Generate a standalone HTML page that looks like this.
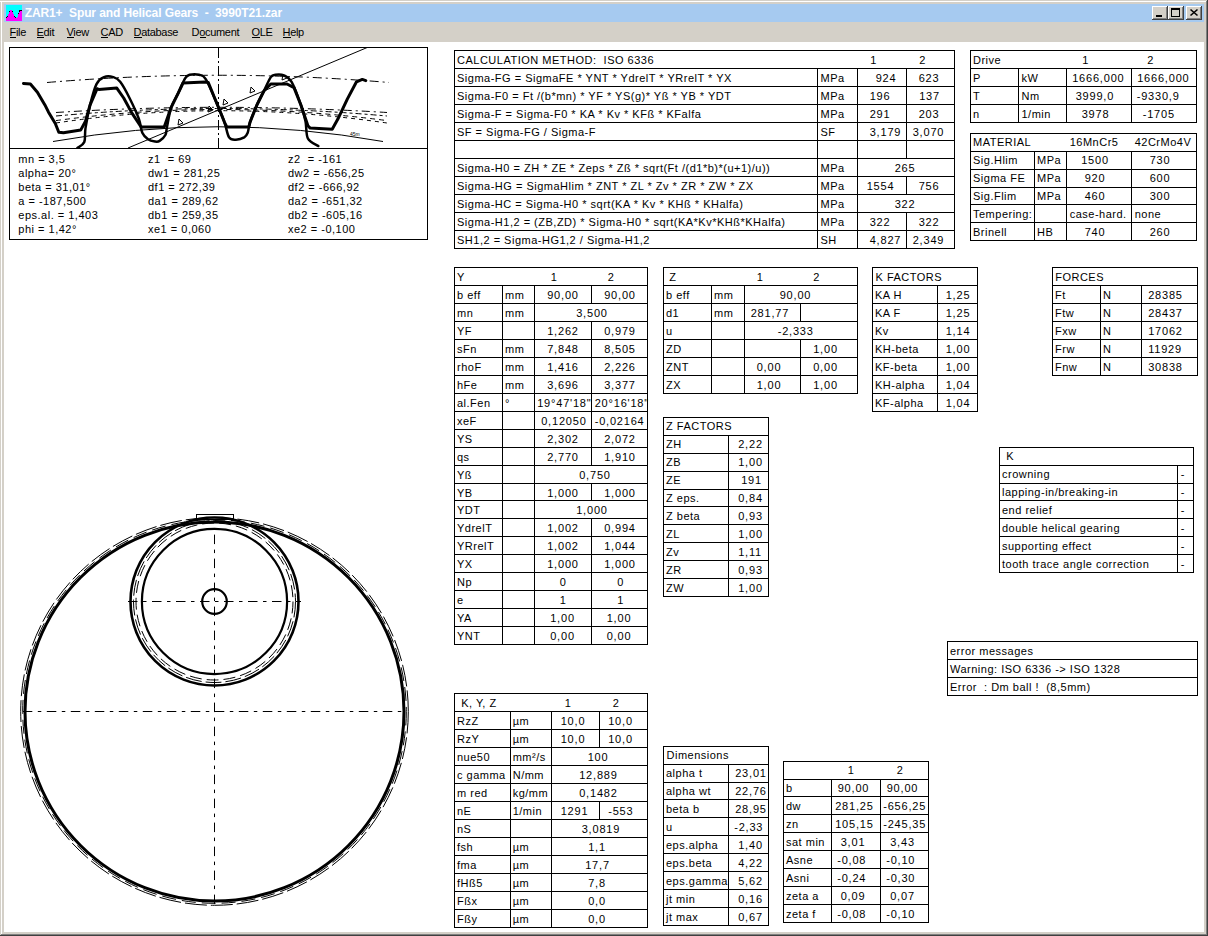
<!DOCTYPE html><html><head><meta charset="utf-8"><style>html,body{margin:0;padding:0;width:1208px;height:936px;overflow:hidden;background:#D4D0C8}text{white-space:pre}</style></head><body><svg width="1208" height="936" viewBox="0 0 1208 936" style="position:absolute;left:0;top:0;font-family:'Liberation Sans',sans-serif">
<rect x="0" y="0" width="1208" height="936" fill="#D4D0C8"/>
<rect x="0" y="1" width="1207" height="1" fill="#FFFFFF"/>
<rect x="1" y="1" width="1" height="934" fill="#FFFFFF"/>
<rect x="1206" y="1" width="1" height="934" fill="#808080"/>
<rect x="1" y="934" width="1206" height="1" fill="#808080"/>
<rect x="1207" y="0" width="1" height="936" fill="#404040"/>
<rect x="0" y="935" width="1208" height="1" fill="#404040"/>
<rect x="4" y="4" width="1200" height="18" fill="#A6CAF0"/>
<g>
<rect x="6" y="5" width="16" height="16" fill="#00FFFF"/>
<rect x="6" y="18" width="1" height="3" fill="#FF00FF"/>
<rect x="7" y="17" width="1" height="4" fill="#FF00FF"/>
<rect x="8" y="14" width="1" height="7" fill="#FF00FF"/>
<rect x="9" y="12" width="1" height="9" fill="#FF00FF"/>
<rect x="10" y="10" width="1" height="11" fill="#FF00FF"/>
<rect x="11" y="10" width="1" height="11" fill="#FF00FF"/>
<rect x="12" y="12" width="1" height="9" fill="#FF00FF"/>
<rect x="13" y="14" width="1" height="7" fill="#FF00FF"/>
<rect x="14" y="17" width="1" height="4" fill="#FF00FF"/>
<rect x="15" y="18" width="1" height="3" fill="#FF00FF"/>
<rect x="16" y="18" width="1" height="3" fill="#FF00FF"/>
<rect x="17" y="17" width="1" height="4" fill="#FF00FF"/>
<rect x="18" y="14" width="1" height="7" fill="#FF00FF"/>
<rect x="19" y="12" width="1" height="9" fill="#FF00FF"/>
<rect x="20" y="11" width="1" height="10" fill="#FF00FF"/>
<rect x="21" y="11" width="1" height="10" fill="#FF00FF"/>
<rect x="6" y="17" width="1" height="1" fill="#000000"/>
<rect x="7" y="16" width="1" height="1" fill="#000000"/>
<rect x="9" y="11" width="1" height="1" fill="#000000"/>
<rect x="12" y="11" width="1" height="1" fill="#000000"/>
<rect x="14" y="16" width="1" height="1" fill="#000000"/>
<rect x="15" y="17" width="1" height="1" fill="#000000"/>
<rect x="18" y="13" width="1" height="1" fill="#000000"/>
<rect x="19" y="10" width="1" height="1" fill="#000000"/>
<rect x="19" y="11" width="1" height="1" fill="#000000"/>
<rect x="20" y="10" width="1" height="1" fill="#000000"/>
<rect x="21" y="10" width="1" height="1" fill="#000000"/>
</g>
<text x="24.7" y="17" font-size="12" font-weight="bold" letter-spacing="-0.1" fill="#FFFFFF" xml:space="preserve">ZAR1+  Spur and Helical Gears  -  3990T21.zar</text>
<rect x="1152" y="6" width="16" height="14" fill="#404040"/>
<rect x="1152" y="6" width="15" height="13" fill="#FFFFFF"/>
<rect x="1153" y="7" width="14" height="12" fill="#808080"/>
<rect x="1153" y="7" width="13" height="11" fill="#D4D0C8"/>
<rect x="1156" y="15" width="6" height="2" fill="#000"/>
<rect x="1168" y="6" width="16" height="14" fill="#404040"/>
<rect x="1168" y="6" width="15" height="13" fill="#FFFFFF"/>
<rect x="1169" y="7" width="14" height="12" fill="#808080"/>
<rect x="1169" y="7" width="13" height="11" fill="#D4D0C8"/>
<rect x="1171" y="8" width="9" height="9" fill="#000"/><rect x="1172" y="10" width="7" height="6" fill="#D4D0C8"/>
<rect x="1186" y="6" width="16" height="14" fill="#404040"/>
<rect x="1186" y="6" width="15" height="13" fill="#FFFFFF"/>
<rect x="1187" y="7" width="14" height="12" fill="#808080"/>
<rect x="1187" y="7" width="13" height="11" fill="#D4D0C8"/>
<path d="M1190.5,9.5 L1197.5,15.5 M1197.5,9.5 L1190.5,15.5" stroke="#000" stroke-width="1.6" fill="none"/>
<text x="9.5" y="36" font-size="11" letter-spacing="-0.3" fill="#000">File</text>
<text x="36.5" y="36" font-size="11" letter-spacing="-0.3" fill="#000">Edit</text>
<text x="66.5" y="36" font-size="11" letter-spacing="-0.3" fill="#000">View</text>
<text x="100.5" y="36" font-size="11" letter-spacing="-0.3" fill="#000">CAD</text>
<text x="133.5" y="36" font-size="11" letter-spacing="-0.3" fill="#000">Database</text>
<text x="191.5" y="36" font-size="11" letter-spacing="-0.3" fill="#000">Document</text>
<text x="251.5" y="36" font-size="11" letter-spacing="-0.3" fill="#000">OLE</text>
<text x="282.5" y="36" font-size="11" letter-spacing="-0.3" fill="#000">Help</text>
<rect x="4" y="42" width="1200" height="890" fill="#FFFFFF"/>
<rect x="10" y="37" width="6" height="1" fill="#000"/>
<rect x="37" y="37" width="7" height="1" fill="#000"/>
<rect x="67" y="37" width="7" height="1" fill="#000"/>
<rect x="101" y="37" width="7" height="1" fill="#000"/>
<rect x="134" y="37" width="8" height="1" fill="#000"/>
<rect x="200" y="37" width="6" height="1" fill="#000"/>
<rect x="252" y="37" width="8" height="1" fill="#000"/>
<rect x="283" y="37" width="8" height="1" fill="#000"/>
<rect x="9" y="47" width="419" height="1" fill="#000"/>
<rect x="9" y="239" width="419" height="1" fill="#000"/>
<rect x="9" y="47" width="1" height="193" fill="#000"/>
<rect x="427" y="47" width="1" height="193" fill="#000"/>
<rect x="9" y="148" width="419" height="1" fill="#000"/>
<svg x="10" y="48" width="417" height="100" viewBox="10 48 417 100" overflow="hidden">
<line x1="218.5" y1="48" x2="218.5" y2="148" stroke="#000" stroke-width="1" stroke-dasharray="10 3 2 3"/>
<path d="M47,82.5 Q218,68 389,82.5" fill="none" stroke="#000" stroke-width="1" stroke-dasharray="9 4 2 4"/>
<path d="M53,141.5 Q218,112 383,141.5" fill="none" stroke="#000" stroke-width="1"/>
<path d="M56,112.5 Q218,102.1 387,112.5" fill="none" stroke="#000" stroke-width="1" stroke-dasharray="8 4 2 4"/>
<path d="M56,116 Q218,101 387,116" fill="none" stroke="#000" stroke-width="1" stroke-dasharray="6 3 3 3"/>
<path d="M56,120.6 Q218,98.4 387,120.6" fill="none" stroke="#000" stroke-width="1" stroke-dasharray="5 4"/>
<path d="M56,123 Q218,98.4 387,123" fill="none" stroke="#000" stroke-width="1" stroke-dasharray="4 4"/>
<line x1="128" y1="148" x2="367" y2="47.6" stroke="#000" stroke-width="1"/>
<polyline points="23.5,83.5 30.4,84.1 37.4,92.2 44.9,104.9 48.4,111.9 55.3,123.5 58.8,132.2 63.5,132.7 80.8,129.9 85.5,121.2 90.1,104.9 97.1,88.7 98.8,89.5 116.8,88.1 123.7,98 131.8,112.9 141.1,127 164.2,127 171.2,107.3 178.1,93.4 183,83 204.8,82 208.3,82.5 217.5,105 224.5,122.3 226.8,127 248.8,127 250,122.3 256.9,105 263.9,91 270.8,84 287,84 294,87.6 300.9,105 307.9,125.8 310.2,128.1 332.2,129.3 338,118.8 347.3,99.1 356.5,81.8 362.3,79.4 365.8,80.6" fill="none" stroke="#000" stroke-width="3" stroke-linejoin="round" stroke-linecap="round"/>
<path d="M77.4,148 C78.6,147.0 83.0,145.3 84.3,142 C85.6,138.7 84.5,134.3 85.5,128.1 C86.5,121.9 88.3,112.2 90.1,104.9 C91.9,97.6 94.2,88.7 96.5,84.1 C98.8,79.5 101.2,78.3 104,77.1 C106.8,75.9 110.6,76.3 113.3,77.1 C116.0,77.9 117.5,78.3 120.2,81.8 C122.9,85.3 126.4,91.8 129.5,98 C132.6,104.2 136.7,113.0 138.8,118.8 C140.9,124.6 140.8,129.3 142.3,132.7 C143.8,136.1 145.9,137.7 148,139.2 C150.1,140.7 153.1,141.2 155,141.5 C156.9,141.8 157.9,142.0 159.6,140.9 C161.3,139.8 164.2,137.3 165.4,135 C166.6,132.7 166.0,131.6 167,127 C168.0,122.4 169.3,112.9 171.2,107.3 C173.0,101.7 175.8,98.2 178.1,93.4 C180.4,88.6 183.2,81.4 185.1,78.3 C187.0,75.2 187.4,75.4 189.7,74.8 C192.0,74.2 196.3,74.0 199,74.8 C201.7,75.6 202.8,74.4 205.9,79.4 C209.0,84.4 214.4,97.8 217.5,105 C220.6,112.2 222.6,116.9 224.5,122.3 C226.4,127.7 227.2,134.5 229.1,137.4 C231.0,140.3 233.5,139.7 236,139.7 C238.5,139.7 242.2,138.6 244.2,137.4 C246.1,136.2 246.7,135.2 247.7,132.7 C248.7,130.2 248.5,126.9 250,122.3 C251.5,117.7 254.6,110.2 256.9,105 C259.2,99.8 261.6,95.7 263.9,91 C266.2,86.3 268.9,79.8 270.8,77.1 C272.7,74.4 273.3,75.1 275.5,74.8 C277.7,74.5 281.3,74.3 284,75.5 C286.7,76.7 288.8,76.9 291.6,81.8 C294.4,86.7 298.6,98.4 300.9,105 C303.2,111.6 304.3,115.6 305.5,121.2 C306.7,126.8 305.8,134.4 307.9,138.5 C310.0,142.6 316.6,144.8 318.3,146" fill="none" stroke="#000" stroke-width="2.5" stroke-linejoin="round" stroke-linecap="round"/>
<path d="M178,125 l1,-6 l4,4 z" fill="none" stroke="#000" stroke-width="1"/>
<path d="M208,112 l1,-6 l4,4 z" fill="none" stroke="#000" stroke-width="1"/>
<path d="M223,105 l1,-6 l4,4 z" fill="none" stroke="#000" stroke-width="1"/>
<path d="M250,93 l1,-6 l4,4 z" fill="none" stroke="#000" stroke-width="1"/>
<path d="M282,80 l1,-6 l4,4 z" fill="none" stroke="#000" stroke-width="1"/>
<text x="350" y="136" font-size="5" fill="#000">45m</text>
</svg>
<text x="18.3" y="163" font-size="11" letter-spacing="0.5" fill="#000" xml:space="preserve">mn = 3,5</text>
<text x="18.3" y="177" font-size="11" letter-spacing="0.5" fill="#000" xml:space="preserve">alpha= 20°</text>
<text x="18.3" y="191" font-size="11" letter-spacing="0.5" fill="#000" xml:space="preserve">beta = 31,01°</text>
<text x="18.3" y="205" font-size="11" letter-spacing="0.5" fill="#000" xml:space="preserve">a = -187,500</text>
<text x="18.3" y="219" font-size="11" letter-spacing="0.5" fill="#000" xml:space="preserve">eps.al. = 1,403</text>
<text x="18.3" y="233" font-size="11" letter-spacing="0.5" fill="#000" xml:space="preserve">phi = 1,42°</text>
<text x="148.0" y="163" font-size="11" letter-spacing="0.5" fill="#000" xml:space="preserve">z1  = 69</text>
<text x="148.0" y="177" font-size="11" letter-spacing="0.5" fill="#000" xml:space="preserve">dw1 = 281,25</text>
<text x="148.0" y="191" font-size="11" letter-spacing="0.5" fill="#000" xml:space="preserve">df1 = 272,39</text>
<text x="148.0" y="205" font-size="11" letter-spacing="0.5" fill="#000" xml:space="preserve">da1 = 289,62</text>
<text x="148.0" y="219" font-size="11" letter-spacing="0.5" fill="#000" xml:space="preserve">db1 = 259,35</text>
<text x="148.0" y="233" font-size="11" letter-spacing="0.5" fill="#000" xml:space="preserve">xe1 = 0,060</text>
<text x="288.0" y="163" font-size="11" letter-spacing="0.5" fill="#000" xml:space="preserve">z2  = -161</text>
<text x="288.0" y="177" font-size="11" letter-spacing="0.5" fill="#000" xml:space="preserve">dw2 = -656,25</text>
<text x="288.0" y="191" font-size="11" letter-spacing="0.5" fill="#000" xml:space="preserve">df2 = -666,92</text>
<text x="288.0" y="205" font-size="11" letter-spacing="0.5" fill="#000" xml:space="preserve">da2 = -651,32</text>
<text x="288.0" y="219" font-size="11" letter-spacing="0.5" fill="#000" xml:space="preserve">db2 = -605,16</text>
<text x="288.0" y="233" font-size="11" letter-spacing="0.5" fill="#000" xml:space="preserve">xe2 = -0,100</text>
<g fill="none" stroke="#000">
<circle cx="214.5" cy="711.5" r="189.5" stroke-width="3"/>
<circle cx="214.5" cy="711.5" r="191.8" stroke-width="1" stroke-dasharray="14 6"/>
<circle cx="214.5" cy="711.5" r="193.8" stroke-width="1" stroke-dasharray="22 4"/>
<circle cx="214.5" cy="601.5" r="72.6" stroke-width="2.2"/>
<circle cx="214.5" cy="601.5" r="84" stroke-width="2.6"/>
<circle cx="214.5" cy="601.5" r="78.5" stroke-width="1" stroke-dasharray="12 5"/>
<circle cx="214.5" cy="601.5" r="81" stroke-width="1" stroke-dasharray="16 4"/>
<circle cx="214.5" cy="601.5" r="12.3" stroke-width="2.2"/>
<rect x="196.5" y="514.5" width="37" height="5" stroke-width="1"/>
</g>
<g stroke="#000" stroke-width="1" fill="none" stroke-dasharray="9.5 5.5 3.5 5.5">
<line x1="22.8" y1="711.5" x2="404" y2="711.5"/>
<line x1="214.5" y1="534.6" x2="214.5" y2="905"/>
<line x1="128" y1="601.5" x2="301" y2="601.5"/>
</g>
<rect x="454" y="50" width="501" height="1" fill="#000"/>
<rect x="454" y="68" width="501" height="1" fill="#000"/>
<rect x="454" y="86" width="501" height="1" fill="#000"/>
<rect x="454" y="104" width="501" height="1" fill="#000"/>
<rect x="454" y="122" width="501" height="1" fill="#000"/>
<rect x="454" y="140" width="501" height="1" fill="#000"/>
<rect x="454" y="158" width="501" height="1" fill="#000"/>
<rect x="454" y="176" width="501" height="1" fill="#000"/>
<rect x="454" y="194" width="501" height="1" fill="#000"/>
<rect x="454" y="212" width="501" height="1" fill="#000"/>
<rect x="454" y="230" width="501" height="1" fill="#000"/>
<rect x="454" y="248" width="501" height="1" fill="#000"/>
<rect x="454" y="50" width="1" height="199" fill="#000"/>
<rect x="954" y="50" width="1" height="199" fill="#000"/>
<text x="457.0" y="64" font-size="11" letter-spacing="0.5" fill="#000">CALCULATION METHOD:  ISO 6336</text>
<text x="870.2" y="64" font-size="11" letter-spacing="0.8" fill="#000">1</text>
<text x="919.2" y="64" font-size="11" letter-spacing="0.8" fill="#000">2</text>
<rect x="817" y="68" width="1" height="19" fill="#000"/>
<rect x="857" y="68" width="1" height="19" fill="#000"/>
<rect x="906" y="68" width="1" height="19" fill="#000"/>
<text x="457.0" y="82" font-size="11" letter-spacing="0.5" fill="#000">Sigma-FG = SigmaFE * YNT * YdrelT * YRrelT * YX</text>
<text x="820.5" y="82" font-size="11" letter-spacing="0.5" fill="#000">MPa</text>
<text x="875.7" y="82" font-size="11" letter-spacing="0.8" fill="#000">924</text>
<text x="918.7" y="82" font-size="11" letter-spacing="0.8" fill="#000">623</text>
<rect x="817" y="86" width="1" height="19" fill="#000"/>
<rect x="857" y="86" width="1" height="19" fill="#000"/>
<rect x="906" y="86" width="1" height="19" fill="#000"/>
<text x="457.0" y="100" font-size="11" letter-spacing="0.5" fill="#000">Sigma-F0 = Ft /(b*mn) * YF * YS(g)* Yß * YB * YDT</text>
<text x="820.5" y="100" font-size="11" letter-spacing="0.5" fill="#000">MPa</text>
<text x="869.7" y="100" font-size="11" letter-spacing="0.8" fill="#000">196</text>
<text x="919.2" y="100" font-size="11" letter-spacing="0.8" fill="#000">137</text>
<rect x="817" y="104" width="1" height="19" fill="#000"/>
<rect x="857" y="104" width="1" height="19" fill="#000"/>
<rect x="906" y="104" width="1" height="19" fill="#000"/>
<text x="457.0" y="118" font-size="11" letter-spacing="0.5" fill="#000">Sigma-F = Sigma-F0 * KA * Kv * KFß * KFalfa</text>
<text x="820.5" y="118" font-size="11" letter-spacing="0.5" fill="#000">MPa</text>
<text x="869.7" y="118" font-size="11" letter-spacing="0.8" fill="#000">291</text>
<text x="918.7" y="118" font-size="11" letter-spacing="0.8" fill="#000">203</text>
<rect x="817" y="122" width="1" height="19" fill="#000"/>
<rect x="857" y="122" width="1" height="19" fill="#000"/>
<rect x="906" y="122" width="1" height="19" fill="#000"/>
<text x="457.0" y="136" font-size="11" letter-spacing="0.5" fill="#000">SF = Sigma-FG / Sigma-F</text>
<text x="820.5" y="136" font-size="11" letter-spacing="0.5" fill="#000">SF</text>
<text x="869.7" y="136" font-size="11" letter-spacing="0.8" fill="#000">3,179</text>
<text x="912.7" y="136" font-size="11" letter-spacing="0.8" fill="#000">3,070</text>
<rect x="817" y="140" width="1" height="19" fill="#000"/>
<rect x="857" y="140" width="1" height="19" fill="#000"/>
<rect x="906" y="140" width="1" height="19" fill="#000"/>
<rect x="817" y="158" width="1" height="19" fill="#000"/>
<rect x="857" y="158" width="1" height="19" fill="#000"/>
<text x="457.0" y="172" font-size="11" letter-spacing="0.5" fill="#000">Sigma-H0 = ZH * ZE * Zeps * Zß * sqrt(Ft /(d1*b)*(u+1)/u))</text>
<text x="820.5" y="172" font-size="11" letter-spacing="0.5" fill="#000">MPa</text>
<text x="894.7" y="172" font-size="11" letter-spacing="0.8" fill="#000">265</text>
<rect x="817" y="176" width="1" height="19" fill="#000"/>
<rect x="857" y="176" width="1" height="19" fill="#000"/>
<rect x="906" y="176" width="1" height="19" fill="#000"/>
<text x="457.0" y="190" font-size="11" letter-spacing="0.5" fill="#000">Sigma-HG = SigmaHlim * ZNT * ZL * Zv * ZR * ZW * ZX</text>
<text x="820.5" y="190" font-size="11" letter-spacing="0.5" fill="#000">MPa</text>
<text x="866.7" y="190" font-size="11" letter-spacing="0.8" fill="#000">1554</text>
<text x="918.7" y="190" font-size="11" letter-spacing="0.8" fill="#000">756</text>
<rect x="817" y="194" width="1" height="19" fill="#000"/>
<rect x="857" y="194" width="1" height="19" fill="#000"/>
<text x="457.0" y="208" font-size="11" letter-spacing="0.5" fill="#000">Sigma-HC = Sigma-H0 * sqrt(KA * Kv * KHß * KHalfa)</text>
<text x="820.5" y="208" font-size="11" letter-spacing="0.5" fill="#000">MPa</text>
<text x="894.7" y="208" font-size="11" letter-spacing="0.8" fill="#000">322</text>
<rect x="817" y="212" width="1" height="19" fill="#000"/>
<rect x="857" y="212" width="1" height="19" fill="#000"/>
<rect x="906" y="212" width="1" height="19" fill="#000"/>
<text x="457.0" y="226" font-size="11" letter-spacing="0.5" fill="#000">Sigma-H1,2 = (ZB,ZD) * Sigma-H0 * sqrt(KA*Kv*KHß*KHalfa)</text>
<text x="820.5" y="226" font-size="11" letter-spacing="0.5" fill="#000">MPa</text>
<text x="869.7" y="226" font-size="11" letter-spacing="0.8" fill="#000">322</text>
<text x="918.7" y="226" font-size="11" letter-spacing="0.8" fill="#000">322</text>
<rect x="817" y="230" width="1" height="19" fill="#000"/>
<rect x="857" y="230" width="1" height="19" fill="#000"/>
<rect x="906" y="230" width="1" height="19" fill="#000"/>
<text x="457.0" y="244" font-size="11" letter-spacing="0.5" fill="#000">SH1,2 = Sigma-HG1,2 / Sigma-H1,2</text>
<text x="820.5" y="244" font-size="11" letter-spacing="0.5" fill="#000">SH</text>
<text x="869.7" y="244" font-size="11" letter-spacing="0.8" fill="#000">4,827</text>
<text x="912.7" y="244" font-size="11" letter-spacing="0.8" fill="#000">2,349</text>
<rect x="970" y="50" width="227" height="1" fill="#000"/>
<rect x="970" y="68" width="227" height="1" fill="#000"/>
<rect x="970" y="86" width="227" height="1" fill="#000"/>
<rect x="970" y="104" width="227" height="1" fill="#000"/>
<rect x="970" y="122" width="227" height="1" fill="#000"/>
<rect x="970" y="50" width="1" height="73" fill="#000"/>
<rect x="1196" y="50" width="1" height="73" fill="#000"/>
<text x="973.0" y="64" font-size="11" letter-spacing="0.5" fill="#000">Drive</text>
<text x="1082.2" y="64" font-size="11" letter-spacing="0.8" fill="#000">1</text>
<text x="1147.2" y="64" font-size="11" letter-spacing="0.8" fill="#000">2</text>
<rect x="1018" y="68" width="1" height="19" fill="#000"/>
<rect x="1066" y="68" width="1" height="19" fill="#000"/>
<rect x="1131" y="68" width="1" height="19" fill="#000"/>
<text x="973.0" y="82" font-size="11" letter-spacing="0.5" fill="#000">P</text>
<text x="1021.5" y="82" font-size="11" letter-spacing="0.5" fill="#000">kW</text>
<text x="1072.2" y="82" font-size="11" letter-spacing="0.8" fill="#000">1666,000</text>
<text x="1137.2" y="82" font-size="11" letter-spacing="0.8" fill="#000">1666,000</text>
<rect x="1018" y="86" width="1" height="19" fill="#000"/>
<rect x="1066" y="86" width="1" height="19" fill="#000"/>
<rect x="1131" y="86" width="1" height="19" fill="#000"/>
<text x="973.0" y="100" font-size="11" letter-spacing="0.5" fill="#000">T</text>
<text x="1021.5" y="100" font-size="11" letter-spacing="0.5" fill="#000">Nm</text>
<text x="1075.7" y="100" font-size="11" letter-spacing="0.8" fill="#000">3999,0</text>
<text x="1136.7" y="100" font-size="11" letter-spacing="0.8" fill="#000">-9330,9</text>
<rect x="1018" y="104" width="1" height="19" fill="#000"/>
<rect x="1066" y="104" width="1" height="19" fill="#000"/>
<rect x="1131" y="104" width="1" height="19" fill="#000"/>
<text x="973.0" y="118" font-size="11" letter-spacing="0.5" fill="#000">n</text>
<text x="1021.5" y="118" font-size="11" letter-spacing="0.5" fill="#000">1/min</text>
<text x="1081.7" y="118" font-size="11" letter-spacing="0.8" fill="#000">3978</text>
<text x="1142.7" y="118" font-size="11" letter-spacing="0.8" fill="#000">-1705</text>
<rect x="970" y="133" width="227" height="1" fill="#000"/>
<rect x="970" y="151" width="227" height="1" fill="#000"/>
<rect x="970" y="169" width="227" height="1" fill="#000"/>
<rect x="970" y="187" width="227" height="1" fill="#000"/>
<rect x="970" y="204" width="227" height="1" fill="#000"/>
<rect x="970" y="222" width="227" height="1" fill="#000"/>
<rect x="970" y="240" width="227" height="1" fill="#000"/>
<rect x="970" y="133" width="1" height="108" fill="#000"/>
<rect x="1196" y="133" width="1" height="108" fill="#000"/>
<text x="973.0" y="146" font-size="11" letter-spacing="0.5" fill="#000">MATERIAL</text>
<text x="1069.7" y="146" font-size="11" letter-spacing="0.5" fill="#000">16MnCr5</text>
<text x="1134.7" y="146" font-size="11" letter-spacing="0.5" fill="#000">42CrMo4V</text>
<rect x="1034" y="151" width="1" height="19" fill="#000"/>
<rect x="1066" y="151" width="1" height="19" fill="#000"/>
<rect x="1131" y="151" width="1" height="19" fill="#000"/>
<text x="973.0" y="164" font-size="11" letter-spacing="0.5" fill="#000">Sig.Hlim</text>
<text x="1037.0" y="164" font-size="11" letter-spacing="0.5" fill="#000">MPa</text>
<text x="1081.2" y="164" font-size="11" letter-spacing="0.8" fill="#000">1500</text>
<text x="1149.7" y="164" font-size="11" letter-spacing="0.8" fill="#000">730</text>
<rect x="1034" y="169" width="1" height="19" fill="#000"/>
<rect x="1066" y="169" width="1" height="19" fill="#000"/>
<rect x="1131" y="169" width="1" height="19" fill="#000"/>
<text x="973.0" y="182" font-size="11" letter-spacing="0.5" fill="#000">Sigma FE</text>
<text x="1037.0" y="182" font-size="11" letter-spacing="0.5" fill="#000">MPa</text>
<text x="1084.7" y="182" font-size="11" letter-spacing="0.8" fill="#000">920</text>
<text x="1149.7" y="182" font-size="11" letter-spacing="0.8" fill="#000">600</text>
<rect x="1034" y="187" width="1" height="18" fill="#000"/>
<rect x="1066" y="187" width="1" height="18" fill="#000"/>
<rect x="1131" y="187" width="1" height="18" fill="#000"/>
<text x="973.0" y="200" font-size="11" letter-spacing="0.5" fill="#000">Sig.Flim</text>
<text x="1037.0" y="200" font-size="11" letter-spacing="0.5" fill="#000">MPa</text>
<text x="1084.7" y="200" font-size="11" letter-spacing="0.8" fill="#000">460</text>
<text x="1149.7" y="200" font-size="11" letter-spacing="0.8" fill="#000">300</text>
<rect x="1034" y="204" width="1" height="19" fill="#000"/>
<rect x="1066" y="204" width="1" height="19" fill="#000"/>
<rect x="1131" y="204" width="1" height="19" fill="#000"/>
<text x="973.0" y="218" font-size="11" letter-spacing="0.5" fill="#000">Tempering:</text>
<text x="1069.7" y="218" font-size="11" letter-spacing="0.5" fill="#000">case-hard.</text>
<text x="1134.7" y="218" font-size="11" letter-spacing="0.5" fill="#000">none</text>
<rect x="1034" y="222" width="1" height="19" fill="#000"/>
<rect x="1066" y="222" width="1" height="19" fill="#000"/>
<rect x="1131" y="222" width="1" height="19" fill="#000"/>
<text x="973.0" y="236" font-size="11" letter-spacing="0.5" fill="#000">Brinell</text>
<text x="1037.0" y="236" font-size="11" letter-spacing="0.5" fill="#000">HB</text>
<text x="1084.7" y="236" font-size="11" letter-spacing="0.8" fill="#000">740</text>
<text x="1149.7" y="236" font-size="11" letter-spacing="0.8" fill="#000">260</text>
<rect x="454" y="267" width="194" height="1" fill="#000"/>
<rect x="454" y="285" width="194" height="1" fill="#000"/>
<rect x="454" y="303" width="194" height="1" fill="#000"/>
<rect x="454" y="321" width="194" height="1" fill="#000"/>
<rect x="454" y="339" width="194" height="1" fill="#000"/>
<rect x="454" y="357" width="194" height="1" fill="#000"/>
<rect x="454" y="375" width="194" height="1" fill="#000"/>
<rect x="454" y="393" width="194" height="1" fill="#000"/>
<rect x="454" y="411" width="194" height="1" fill="#000"/>
<rect x="454" y="429" width="194" height="1" fill="#000"/>
<rect x="454" y="447" width="194" height="1" fill="#000"/>
<rect x="454" y="465" width="194" height="1" fill="#000"/>
<rect x="454" y="483" width="194" height="1" fill="#000"/>
<rect x="454" y="500" width="194" height="1" fill="#000"/>
<rect x="454" y="518" width="194" height="1" fill="#000"/>
<rect x="454" y="536" width="194" height="1" fill="#000"/>
<rect x="454" y="554" width="194" height="1" fill="#000"/>
<rect x="454" y="572" width="194" height="1" fill="#000"/>
<rect x="454" y="590" width="194" height="1" fill="#000"/>
<rect x="454" y="608" width="194" height="1" fill="#000"/>
<rect x="454" y="626" width="194" height="1" fill="#000"/>
<rect x="454" y="644" width="194" height="1" fill="#000"/>
<rect x="454" y="267" width="1" height="378" fill="#000"/>
<rect x="647" y="267" width="1" height="378" fill="#000"/>
<text x="457.0" y="281" font-size="11" letter-spacing="0.5" fill="#000">Y</text>
<text x="550.7" y="281" font-size="11" letter-spacing="0.8" fill="#000">1</text>
<text x="607.7" y="281" font-size="11" letter-spacing="0.8" fill="#000">2</text>
<rect x="502" y="285" width="1" height="19" fill="#000"/>
<rect x="534" y="285" width="1" height="19" fill="#000"/>
<rect x="591" y="285" width="1" height="19" fill="#000"/>
<text x="457.0" y="299" font-size="11" letter-spacing="0.5" fill="#000">b eff</text>
<text x="505.0" y="299" font-size="11" letter-spacing="0.5" fill="#000">mm</text>
<text x="547.2" y="299" font-size="11" letter-spacing="0.8" fill="#000">90,00</text>
<text x="604.2" y="299" font-size="11" letter-spacing="0.8" fill="#000">90,00</text>
<rect x="502" y="303" width="1" height="19" fill="#000"/>
<rect x="534" y="303" width="1" height="19" fill="#000"/>
<text x="457.0" y="317" font-size="11" letter-spacing="0.5" fill="#000">mn</text>
<text x="505.0" y="317" font-size="11" letter-spacing="0.5" fill="#000">mm</text>
<text x="576.2" y="317" font-size="11" letter-spacing="0.8" fill="#000">3,500</text>
<rect x="502" y="321" width="1" height="19" fill="#000"/>
<rect x="534" y="321" width="1" height="19" fill="#000"/>
<rect x="591" y="321" width="1" height="19" fill="#000"/>
<text x="457.0" y="335" font-size="11" letter-spacing="0.5" fill="#000">YF</text>
<text x="547.2" y="335" font-size="11" letter-spacing="0.8" fill="#000">1,262</text>
<text x="604.2" y="335" font-size="11" letter-spacing="0.8" fill="#000">0,979</text>
<rect x="502" y="339" width="1" height="19" fill="#000"/>
<rect x="534" y="339" width="1" height="19" fill="#000"/>
<rect x="591" y="339" width="1" height="19" fill="#000"/>
<text x="457.0" y="353" font-size="11" letter-spacing="0.5" fill="#000">sFn</text>
<text x="505.0" y="353" font-size="11" letter-spacing="0.5" fill="#000">mm</text>
<text x="547.2" y="353" font-size="11" letter-spacing="0.8" fill="#000">7,848</text>
<text x="604.2" y="353" font-size="11" letter-spacing="0.8" fill="#000">8,505</text>
<rect x="502" y="357" width="1" height="19" fill="#000"/>
<rect x="534" y="357" width="1" height="19" fill="#000"/>
<rect x="591" y="357" width="1" height="19" fill="#000"/>
<text x="457.0" y="371" font-size="11" letter-spacing="0.5" fill="#000">rhoF</text>
<text x="505.0" y="371" font-size="11" letter-spacing="0.5" fill="#000">mm</text>
<text x="547.2" y="371" font-size="11" letter-spacing="0.8" fill="#000">1,416</text>
<text x="604.2" y="371" font-size="11" letter-spacing="0.8" fill="#000">2,226</text>
<rect x="502" y="375" width="1" height="19" fill="#000"/>
<rect x="534" y="375" width="1" height="19" fill="#000"/>
<rect x="591" y="375" width="1" height="19" fill="#000"/>
<text x="457.0" y="389" font-size="11" letter-spacing="0.5" fill="#000">hFe</text>
<text x="505.0" y="389" font-size="11" letter-spacing="0.5" fill="#000">mm</text>
<text x="547.2" y="389" font-size="11" letter-spacing="0.8" fill="#000">3,696</text>
<text x="604.2" y="389" font-size="11" letter-spacing="0.8" fill="#000">3,377</text>
<rect x="502" y="393" width="1" height="19" fill="#000"/>
<rect x="534" y="393" width="1" height="19" fill="#000"/>
<rect x="591" y="393" width="1" height="19" fill="#000"/>
<text x="457.0" y="407" font-size="11" letter-spacing="0.5" fill="#000">al.Fen</text>
<text x="505.0" y="407" font-size="11" letter-spacing="0.8" fill="#000">°</text>
<text x="537.2" y="407" font-size="11" letter-spacing="0.8" fill="#000">19°47'18"</text>
<text x="594.7" y="407" font-size="11" letter-spacing="0.8" fill="#000">20°16'18"</text>
<rect x="502" y="411" width="1" height="19" fill="#000"/>
<rect x="534" y="411" width="1" height="19" fill="#000"/>
<rect x="591" y="411" width="1" height="19" fill="#000"/>
<text x="457.0" y="425" font-size="11" letter-spacing="0.5" fill="#000">xeF</text>
<text x="541.2" y="425" font-size="11" letter-spacing="0.8" fill="#000">0,12050</text>
<text x="594.7" y="425" font-size="11" letter-spacing="0.8" fill="#000">-0,02164</text>
<rect x="502" y="429" width="1" height="19" fill="#000"/>
<rect x="534" y="429" width="1" height="19" fill="#000"/>
<rect x="591" y="429" width="1" height="19" fill="#000"/>
<text x="457.0" y="443" font-size="11" letter-spacing="0.5" fill="#000">YS</text>
<text x="547.2" y="443" font-size="11" letter-spacing="0.8" fill="#000">2,302</text>
<text x="604.2" y="443" font-size="11" letter-spacing="0.8" fill="#000">2,072</text>
<rect x="502" y="447" width="1" height="19" fill="#000"/>
<rect x="534" y="447" width="1" height="19" fill="#000"/>
<rect x="591" y="447" width="1" height="19" fill="#000"/>
<text x="457.0" y="461" font-size="11" letter-spacing="0.5" fill="#000">qs</text>
<text x="547.2" y="461" font-size="11" letter-spacing="0.8" fill="#000">2,770</text>
<text x="604.2" y="461" font-size="11" letter-spacing="0.8" fill="#000">1,910</text>
<rect x="502" y="465" width="1" height="19" fill="#000"/>
<rect x="534" y="465" width="1" height="19" fill="#000"/>
<text x="457.0" y="479" font-size="11" letter-spacing="0.5" fill="#000">Yß</text>
<text x="579.2" y="479" font-size="11" letter-spacing="0.8" fill="#000">0,750</text>
<rect x="502" y="483" width="1" height="18" fill="#000"/>
<rect x="534" y="483" width="1" height="18" fill="#000"/>
<rect x="591" y="483" width="1" height="18" fill="#000"/>
<text x="457.0" y="497" font-size="11" letter-spacing="0.5" fill="#000">YB</text>
<text x="547.2" y="497" font-size="11" letter-spacing="0.8" fill="#000">1,000</text>
<text x="604.2" y="497" font-size="11" letter-spacing="0.8" fill="#000">1,000</text>
<rect x="502" y="500" width="1" height="19" fill="#000"/>
<rect x="534" y="500" width="1" height="19" fill="#000"/>
<text x="457.0" y="514" font-size="11" letter-spacing="0.5" fill="#000">YDT</text>
<text x="576.2" y="514" font-size="11" letter-spacing="0.8" fill="#000">1,000</text>
<rect x="502" y="518" width="1" height="19" fill="#000"/>
<rect x="534" y="518" width="1" height="19" fill="#000"/>
<rect x="591" y="518" width="1" height="19" fill="#000"/>
<text x="457.0" y="532" font-size="11" letter-spacing="0.5" fill="#000">YdrelT</text>
<text x="547.2" y="532" font-size="11" letter-spacing="0.8" fill="#000">1,002</text>
<text x="604.2" y="532" font-size="11" letter-spacing="0.8" fill="#000">0,994</text>
<rect x="502" y="536" width="1" height="19" fill="#000"/>
<rect x="534" y="536" width="1" height="19" fill="#000"/>
<rect x="591" y="536" width="1" height="19" fill="#000"/>
<text x="457.0" y="550" font-size="11" letter-spacing="0.5" fill="#000">YRrelT</text>
<text x="547.2" y="550" font-size="11" letter-spacing="0.8" fill="#000">1,002</text>
<text x="604.2" y="550" font-size="11" letter-spacing="0.8" fill="#000">1,044</text>
<rect x="502" y="554" width="1" height="19" fill="#000"/>
<rect x="534" y="554" width="1" height="19" fill="#000"/>
<rect x="591" y="554" width="1" height="19" fill="#000"/>
<text x="457.0" y="568" font-size="11" letter-spacing="0.5" fill="#000">YX</text>
<text x="547.2" y="568" font-size="11" letter-spacing="0.8" fill="#000">1,000</text>
<text x="604.2" y="568" font-size="11" letter-spacing="0.8" fill="#000">1,000</text>
<rect x="502" y="572" width="1" height="19" fill="#000"/>
<rect x="534" y="572" width="1" height="19" fill="#000"/>
<rect x="591" y="572" width="1" height="19" fill="#000"/>
<text x="457.0" y="586" font-size="11" letter-spacing="0.5" fill="#000">Np</text>
<text x="559.7" y="586" font-size="11" letter-spacing="0.8" fill="#000">0</text>
<text x="617.2" y="586" font-size="11" letter-spacing="0.8" fill="#000">0</text>
<rect x="502" y="590" width="1" height="19" fill="#000"/>
<rect x="534" y="590" width="1" height="19" fill="#000"/>
<rect x="591" y="590" width="1" height="19" fill="#000"/>
<text x="457.0" y="604" font-size="11" letter-spacing="0.5" fill="#000">e</text>
<text x="559.7" y="604" font-size="11" letter-spacing="0.8" fill="#000">1</text>
<text x="617.2" y="604" font-size="11" letter-spacing="0.8" fill="#000">1</text>
<rect x="502" y="608" width="1" height="19" fill="#000"/>
<rect x="534" y="608" width="1" height="19" fill="#000"/>
<rect x="591" y="608" width="1" height="19" fill="#000"/>
<text x="457.0" y="622" font-size="11" letter-spacing="0.5" fill="#000">YA</text>
<text x="550.2" y="622" font-size="11" letter-spacing="0.8" fill="#000">1,00</text>
<text x="606.7" y="622" font-size="11" letter-spacing="0.8" fill="#000">1,00</text>
<rect x="502" y="626" width="1" height="19" fill="#000"/>
<rect x="534" y="626" width="1" height="19" fill="#000"/>
<rect x="591" y="626" width="1" height="19" fill="#000"/>
<text x="457.0" y="640" font-size="11" letter-spacing="0.5" fill="#000">YNT</text>
<text x="550.2" y="640" font-size="11" letter-spacing="0.8" fill="#000">0,00</text>
<text x="606.7" y="640" font-size="11" letter-spacing="0.8" fill="#000">0,00</text>
<rect x="663" y="267" width="195" height="1" fill="#000"/>
<rect x="663" y="285" width="195" height="1" fill="#000"/>
<rect x="663" y="303" width="195" height="1" fill="#000"/>
<rect x="663" y="321" width="195" height="1" fill="#000"/>
<rect x="663" y="339" width="195" height="1" fill="#000"/>
<rect x="663" y="357" width="195" height="1" fill="#000"/>
<rect x="663" y="375" width="195" height="1" fill="#000"/>
<rect x="663" y="393" width="195" height="1" fill="#000"/>
<rect x="663" y="267" width="1" height="127" fill="#000"/>
<rect x="857" y="267" width="1" height="127" fill="#000"/>
<text x="669.2" y="281" font-size="11" letter-spacing="0.5" fill="#000">Z</text>
<text x="756.7" y="281" font-size="11" letter-spacing="0.8" fill="#000">1</text>
<text x="813.2" y="281" font-size="11" letter-spacing="0.8" fill="#000">2</text>
<rect x="711" y="285" width="1" height="19" fill="#000"/>
<rect x="744" y="285" width="1" height="19" fill="#000"/>
<text x="666.0" y="299" font-size="11" letter-spacing="0.5" fill="#000">b eff</text>
<text x="714.0" y="299" font-size="11" letter-spacing="0.5" fill="#000">mm</text>
<text x="779.7" y="299" font-size="11" letter-spacing="0.8" fill="#000">90,00</text>
<rect x="711" y="303" width="1" height="19" fill="#000"/>
<rect x="744" y="303" width="1" height="19" fill="#000"/>
<rect x="800" y="303" width="1" height="19" fill="#000"/>
<text x="666.0" y="317" font-size="11" letter-spacing="0.5" fill="#000">d1</text>
<text x="714.0" y="317" font-size="11" letter-spacing="0.5" fill="#000">mm</text>
<text x="750.7" y="317" font-size="11" letter-spacing="0.8" fill="#000">281,77</text>
<rect x="711" y="321" width="1" height="19" fill="#000"/>
<rect x="744" y="321" width="1" height="19" fill="#000"/>
<text x="666.0" y="335" font-size="11" letter-spacing="0.5" fill="#000">u</text>
<text x="777.7" y="335" font-size="11" letter-spacing="0.8" fill="#000">-2,333</text>
<rect x="711" y="339" width="1" height="19" fill="#000"/>
<rect x="744" y="339" width="1" height="19" fill="#000"/>
<rect x="800" y="339" width="1" height="19" fill="#000"/>
<text x="666.0" y="353" font-size="11" letter-spacing="0.5" fill="#000">ZD</text>
<text x="813.2" y="353" font-size="11" letter-spacing="0.8" fill="#000">1,00</text>
<rect x="711" y="357" width="1" height="19" fill="#000"/>
<rect x="744" y="357" width="1" height="19" fill="#000"/>
<rect x="800" y="357" width="1" height="19" fill="#000"/>
<text x="666.0" y="371" font-size="11" letter-spacing="0.5" fill="#000">ZNT</text>
<text x="756.7" y="371" font-size="11" letter-spacing="0.8" fill="#000">0,00</text>
<text x="813.2" y="371" font-size="11" letter-spacing="0.8" fill="#000">0,00</text>
<rect x="711" y="375" width="1" height="19" fill="#000"/>
<rect x="744" y="375" width="1" height="19" fill="#000"/>
<rect x="800" y="375" width="1" height="19" fill="#000"/>
<text x="666.0" y="389" font-size="11" letter-spacing="0.5" fill="#000">ZX</text>
<text x="756.7" y="389" font-size="11" letter-spacing="0.8" fill="#000">1,00</text>
<text x="813.2" y="389" font-size="11" letter-spacing="0.8" fill="#000">1,00</text>
<rect x="872" y="267" width="106" height="1" fill="#000"/>
<rect x="872" y="285" width="106" height="1" fill="#000"/>
<rect x="872" y="303" width="106" height="1" fill="#000"/>
<rect x="872" y="321" width="106" height="1" fill="#000"/>
<rect x="872" y="339" width="106" height="1" fill="#000"/>
<rect x="872" y="357" width="106" height="1" fill="#000"/>
<rect x="872" y="375" width="106" height="1" fill="#000"/>
<rect x="872" y="393" width="106" height="1" fill="#000"/>
<rect x="872" y="411" width="106" height="1" fill="#000"/>
<rect x="872" y="267" width="1" height="145" fill="#000"/>
<rect x="977" y="267" width="1" height="145" fill="#000"/>
<text x="875.5" y="281" font-size="11" letter-spacing="0.5" fill="#000">K FACTORS</text>
<rect x="937" y="285" width="1" height="19" fill="#000"/>
<text x="875.0" y="299" font-size="11" letter-spacing="0.5" fill="#000">KA H</text>
<text x="945.7" y="299" font-size="11" letter-spacing="0.8" fill="#000">1,25</text>
<rect x="937" y="303" width="1" height="19" fill="#000"/>
<text x="875.0" y="317" font-size="11" letter-spacing="0.5" fill="#000">KA F</text>
<text x="945.7" y="317" font-size="11" letter-spacing="0.8" fill="#000">1,25</text>
<rect x="937" y="321" width="1" height="19" fill="#000"/>
<text x="875.0" y="335" font-size="11" letter-spacing="0.5" fill="#000">Kv</text>
<text x="945.7" y="335" font-size="11" letter-spacing="0.8" fill="#000">1,14</text>
<rect x="937" y="339" width="1" height="19" fill="#000"/>
<text x="875.0" y="353" font-size="11" letter-spacing="0.5" fill="#000">KH-beta</text>
<text x="945.7" y="353" font-size="11" letter-spacing="0.8" fill="#000">1,00</text>
<rect x="937" y="357" width="1" height="19" fill="#000"/>
<text x="875.0" y="371" font-size="11" letter-spacing="0.5" fill="#000">KF-beta</text>
<text x="945.7" y="371" font-size="11" letter-spacing="0.8" fill="#000">1,00</text>
<rect x="937" y="375" width="1" height="19" fill="#000"/>
<text x="875.0" y="389" font-size="11" letter-spacing="0.5" fill="#000">KH-alpha</text>
<text x="945.7" y="389" font-size="11" letter-spacing="0.8" fill="#000">1,04</text>
<rect x="937" y="393" width="1" height="19" fill="#000"/>
<text x="875.0" y="407" font-size="11" letter-spacing="0.5" fill="#000">KF-alpha</text>
<text x="945.7" y="407" font-size="11" letter-spacing="0.8" fill="#000">1,04</text>
<rect x="663" y="417" width="106" height="1" fill="#000"/>
<rect x="663" y="435" width="106" height="1" fill="#000"/>
<rect x="663" y="453" width="106" height="1" fill="#000"/>
<rect x="663" y="471" width="106" height="1" fill="#000"/>
<rect x="663" y="489" width="106" height="1" fill="#000"/>
<rect x="663" y="506" width="106" height="1" fill="#000"/>
<rect x="663" y="524" width="106" height="1" fill="#000"/>
<rect x="663" y="542" width="106" height="1" fill="#000"/>
<rect x="663" y="560" width="106" height="1" fill="#000"/>
<rect x="663" y="578" width="106" height="1" fill="#000"/>
<rect x="663" y="596" width="106" height="1" fill="#000"/>
<rect x="663" y="417" width="1" height="180" fill="#000"/>
<rect x="768" y="417" width="1" height="180" fill="#000"/>
<text x="666.0" y="430" font-size="11" letter-spacing="0.5" fill="#000">Z FACTORS</text>
<rect x="728" y="435" width="1" height="19" fill="#000"/>
<text x="666.0" y="448" font-size="11" letter-spacing="0.5" fill="#000">ZH</text>
<text x="738.2" y="448" font-size="11" letter-spacing="0.8" fill="#000">2,22</text>
<rect x="728" y="453" width="1" height="19" fill="#000"/>
<text x="666.0" y="466" font-size="11" letter-spacing="0.5" fill="#000">ZB</text>
<text x="738.2" y="466" font-size="11" letter-spacing="0.8" fill="#000">1,00</text>
<rect x="728" y="471" width="1" height="19" fill="#000"/>
<text x="666.0" y="484" font-size="11" letter-spacing="0.5" fill="#000">ZE</text>
<text x="741.2" y="484" font-size="11" letter-spacing="0.8" fill="#000">191</text>
<rect x="728" y="489" width="1" height="18" fill="#000"/>
<text x="666.0" y="502" font-size="11" letter-spacing="0.5" fill="#000">Z eps.</text>
<text x="738.2" y="502" font-size="11" letter-spacing="0.8" fill="#000">0,84</text>
<rect x="728" y="506" width="1" height="19" fill="#000"/>
<text x="666.0" y="520" font-size="11" letter-spacing="0.5" fill="#000">Z beta</text>
<text x="738.2" y="520" font-size="11" letter-spacing="0.8" fill="#000">0,93</text>
<rect x="728" y="524" width="1" height="19" fill="#000"/>
<text x="666.0" y="538" font-size="11" letter-spacing="0.5" fill="#000">ZL</text>
<text x="738.2" y="538" font-size="11" letter-spacing="0.8" fill="#000">1,00</text>
<rect x="728" y="542" width="1" height="19" fill="#000"/>
<text x="666.0" y="556" font-size="11" letter-spacing="0.5" fill="#000">Zv</text>
<text x="738.2" y="556" font-size="11" letter-spacing="0.8" fill="#000">1,11</text>
<rect x="728" y="560" width="1" height="19" fill="#000"/>
<text x="666.0" y="574" font-size="11" letter-spacing="0.5" fill="#000">ZR</text>
<text x="738.2" y="574" font-size="11" letter-spacing="0.8" fill="#000">0,93</text>
<rect x="728" y="578" width="1" height="19" fill="#000"/>
<text x="666.0" y="592" font-size="11" letter-spacing="0.5" fill="#000">ZW</text>
<text x="738.2" y="592" font-size="11" letter-spacing="0.8" fill="#000">1,00</text>
<rect x="1052" y="267" width="146" height="1" fill="#000"/>
<rect x="1052" y="285" width="146" height="1" fill="#000"/>
<rect x="1052" y="303" width="146" height="1" fill="#000"/>
<rect x="1052" y="321" width="146" height="1" fill="#000"/>
<rect x="1052" y="339" width="146" height="1" fill="#000"/>
<rect x="1052" y="357" width="146" height="1" fill="#000"/>
<rect x="1052" y="375" width="146" height="1" fill="#000"/>
<rect x="1052" y="267" width="1" height="109" fill="#000"/>
<rect x="1197" y="267" width="1" height="109" fill="#000"/>
<text x="1055.2" y="281" font-size="11" letter-spacing="0.5" fill="#000">FORCES</text>
<rect x="1100" y="285" width="1" height="19" fill="#000"/>
<rect x="1141" y="285" width="1" height="19" fill="#000"/>
<text x="1055.0" y="299" font-size="11" letter-spacing="0.5" fill="#000">Ft</text>
<text x="1103.0" y="299" font-size="11" letter-spacing="0.5" fill="#000">N</text>
<text x="1148.2" y="299" font-size="11" letter-spacing="0.8" fill="#000">28385</text>
<rect x="1100" y="303" width="1" height="19" fill="#000"/>
<rect x="1141" y="303" width="1" height="19" fill="#000"/>
<text x="1055.0" y="317" font-size="11" letter-spacing="0.5" fill="#000">Ftw</text>
<text x="1103.0" y="317" font-size="11" letter-spacing="0.5" fill="#000">N</text>
<text x="1148.2" y="317" font-size="11" letter-spacing="0.8" fill="#000">28437</text>
<rect x="1100" y="321" width="1" height="19" fill="#000"/>
<rect x="1141" y="321" width="1" height="19" fill="#000"/>
<text x="1055.0" y="335" font-size="11" letter-spacing="0.5" fill="#000">Fxw</text>
<text x="1103.0" y="335" font-size="11" letter-spacing="0.5" fill="#000">N</text>
<text x="1148.2" y="335" font-size="11" letter-spacing="0.8" fill="#000">17062</text>
<rect x="1100" y="339" width="1" height="19" fill="#000"/>
<rect x="1141" y="339" width="1" height="19" fill="#000"/>
<text x="1055.0" y="353" font-size="11" letter-spacing="0.5" fill="#000">Frw</text>
<text x="1103.0" y="353" font-size="11" letter-spacing="0.5" fill="#000">N</text>
<text x="1148.2" y="353" font-size="11" letter-spacing="0.8" fill="#000">11929</text>
<rect x="1100" y="357" width="1" height="19" fill="#000"/>
<rect x="1141" y="357" width="1" height="19" fill="#000"/>
<text x="1055.0" y="371" font-size="11" letter-spacing="0.5" fill="#000">Fnw</text>
<text x="1103.0" y="371" font-size="11" letter-spacing="0.5" fill="#000">N</text>
<text x="1148.2" y="371" font-size="11" letter-spacing="0.8" fill="#000">30838</text>
<rect x="999" y="447" width="195" height="1" fill="#000"/>
<rect x="999" y="465" width="195" height="1" fill="#000"/>
<rect x="999" y="483" width="195" height="1" fill="#000"/>
<rect x="999" y="500" width="195" height="1" fill="#000"/>
<rect x="999" y="518" width="195" height="1" fill="#000"/>
<rect x="999" y="536" width="195" height="1" fill="#000"/>
<rect x="999" y="554" width="195" height="1" fill="#000"/>
<rect x="999" y="572" width="195" height="1" fill="#000"/>
<rect x="999" y="447" width="1" height="126" fill="#000"/>
<rect x="1193" y="447" width="1" height="126" fill="#000"/>
<text x="1006.2" y="460" font-size="11" letter-spacing="0.5" fill="#000">K</text>
<rect x="1177" y="465" width="1" height="19" fill="#000"/>
<text x="1002.0" y="478" font-size="11" letter-spacing="0.5" fill="#000">crowning</text>
<text x="1180.7" y="478" font-size="11" letter-spacing="0.8" fill="#000">-</text>
<rect x="1177" y="483" width="1" height="18" fill="#000"/>
<text x="1002.0" y="496" font-size="11" letter-spacing="0.5" fill="#000">lapping-in/breaking-in</text>
<text x="1180.7" y="496" font-size="11" letter-spacing="0.8" fill="#000">-</text>
<rect x="1177" y="500" width="1" height="19" fill="#000"/>
<text x="1002.0" y="514" font-size="11" letter-spacing="0.5" fill="#000">end relief</text>
<text x="1180.7" y="514" font-size="11" letter-spacing="0.8" fill="#000">-</text>
<rect x="1177" y="518" width="1" height="19" fill="#000"/>
<text x="1002.0" y="532" font-size="11" letter-spacing="0.5" fill="#000">double helical gearing</text>
<text x="1180.7" y="532" font-size="11" letter-spacing="0.8" fill="#000">-</text>
<rect x="1177" y="536" width="1" height="19" fill="#000"/>
<text x="1002.0" y="550" font-size="11" letter-spacing="0.5" fill="#000">supporting effect</text>
<text x="1180.7" y="550" font-size="11" letter-spacing="0.8" fill="#000">-</text>
<rect x="1177" y="554" width="1" height="19" fill="#000"/>
<text x="1002.0" y="568" font-size="11" letter-spacing="0.5" fill="#000">tooth trace angle correction</text>
<text x="1180.7" y="568" font-size="11" letter-spacing="0.8" fill="#000">-</text>
<rect x="947" y="641" width="251" height="1" fill="#000"/>
<rect x="947" y="659" width="251" height="1" fill="#000"/>
<rect x="947" y="677" width="251" height="1" fill="#000"/>
<rect x="947" y="695" width="251" height="1" fill="#000"/>
<rect x="947" y="641" width="1" height="55" fill="#000"/>
<rect x="1197" y="641" width="1" height="55" fill="#000"/>
<text x="950.0" y="655" font-size="11" letter-spacing="0.5" fill="#000">error messages</text>
<text x="950.0" y="673" font-size="11" letter-spacing="0.5" fill="#000">Warning: ISO 6336 -&gt; ISO 1328</text>
<text x="950.0" y="691" font-size="11" letter-spacing="0.5" fill="#000">Error  : Dm ball !  (8,5mm)</text>
<rect x="454" y="693" width="194" height="1" fill="#000"/>
<rect x="454" y="711" width="194" height="1" fill="#000"/>
<rect x="454" y="729" width="194" height="1" fill="#000"/>
<rect x="454" y="747" width="194" height="1" fill="#000"/>
<rect x="454" y="765" width="194" height="1" fill="#000"/>
<rect x="454" y="783" width="194" height="1" fill="#000"/>
<rect x="454" y="801" width="194" height="1" fill="#000"/>
<rect x="454" y="819" width="194" height="1" fill="#000"/>
<rect x="454" y="837" width="194" height="1" fill="#000"/>
<rect x="454" y="855" width="194" height="1" fill="#000"/>
<rect x="454" y="873" width="194" height="1" fill="#000"/>
<rect x="454" y="891" width="194" height="1" fill="#000"/>
<rect x="454" y="909" width="194" height="1" fill="#000"/>
<rect x="454" y="927" width="194" height="1" fill="#000"/>
<rect x="454" y="693" width="1" height="235" fill="#000"/>
<rect x="647" y="693" width="1" height="235" fill="#000"/>
<text x="461.2" y="707" font-size="11" letter-spacing="0.5" fill="#000">K, Y, Z</text>
<text x="564.7" y="707" font-size="11" letter-spacing="0.8" fill="#000">1</text>
<text x="612.7" y="707" font-size="11" letter-spacing="0.8" fill="#000">2</text>
<rect x="510" y="711" width="1" height="19" fill="#000"/>
<rect x="551" y="711" width="1" height="19" fill="#000"/>
<rect x="599" y="711" width="1" height="19" fill="#000"/>
<text x="457.0" y="725" font-size="11" letter-spacing="0.5" fill="#000">RzZ</text>
<text x="512.7" y="725" font-size="11" letter-spacing="0.5" fill="#000">µm</text>
<text x="560.7" y="725" font-size="11" letter-spacing="0.8" fill="#000">10,0</text>
<text x="608.2" y="725" font-size="11" letter-spacing="0.8" fill="#000">10,0</text>
<rect x="510" y="729" width="1" height="19" fill="#000"/>
<rect x="551" y="729" width="1" height="19" fill="#000"/>
<rect x="599" y="729" width="1" height="19" fill="#000"/>
<text x="457.0" y="743" font-size="11" letter-spacing="0.5" fill="#000">RzY</text>
<text x="512.7" y="743" font-size="11" letter-spacing="0.5" fill="#000">µm</text>
<text x="560.7" y="743" font-size="11" letter-spacing="0.8" fill="#000">10,0</text>
<text x="608.2" y="743" font-size="11" letter-spacing="0.8" fill="#000">10,0</text>
<rect x="510" y="747" width="1" height="19" fill="#000"/>
<rect x="551" y="747" width="1" height="19" fill="#000"/>
<text x="457.0" y="761" font-size="11" letter-spacing="0.5" fill="#000">nue50</text>
<text x="512.7" y="761" font-size="11" letter-spacing="0.5" fill="#000">mm²/s</text>
<text x="587.7" y="761" font-size="11" letter-spacing="0.8" fill="#000">100</text>
<rect x="510" y="765" width="1" height="19" fill="#000"/>
<rect x="551" y="765" width="1" height="19" fill="#000"/>
<text x="457.0" y="779" font-size="11" letter-spacing="0.5" fill="#000">c gamma</text>
<text x="512.7" y="779" font-size="11" letter-spacing="0.5" fill="#000">N/mm</text>
<text x="579.2" y="779" font-size="11" letter-spacing="0.8" fill="#000">12,889</text>
<rect x="510" y="783" width="1" height="19" fill="#000"/>
<rect x="551" y="783" width="1" height="19" fill="#000"/>
<text x="457.0" y="797" font-size="11" letter-spacing="0.5" fill="#000">m red</text>
<text x="512.7" y="797" font-size="11" letter-spacing="0.5" fill="#000">kg/mm</text>
<text x="579.2" y="797" font-size="11" letter-spacing="0.8" fill="#000">0,1482</text>
<rect x="510" y="801" width="1" height="19" fill="#000"/>
<rect x="551" y="801" width="1" height="19" fill="#000"/>
<rect x="599" y="801" width="1" height="19" fill="#000"/>
<text x="457.0" y="815" font-size="11" letter-spacing="0.5" fill="#000">nE</text>
<text x="512.7" y="815" font-size="11" letter-spacing="0.5" fill="#000">1/min</text>
<text x="560.7" y="815" font-size="11" letter-spacing="0.8" fill="#000">1291</text>
<text x="608.2" y="815" font-size="11" letter-spacing="0.8" fill="#000">-553</text>
<rect x="510" y="819" width="1" height="19" fill="#000"/>
<rect x="551" y="819" width="1" height="19" fill="#000"/>
<text x="457.0" y="833" font-size="11" letter-spacing="0.5" fill="#000">nS</text>
<text x="581.7" y="833" font-size="11" letter-spacing="0.8" fill="#000">3,0819</text>
<rect x="510" y="837" width="1" height="19" fill="#000"/>
<rect x="551" y="837" width="1" height="19" fill="#000"/>
<text x="457.0" y="851" font-size="11" letter-spacing="0.5" fill="#000">fsh</text>
<text x="512.7" y="851" font-size="11" letter-spacing="0.5" fill="#000">µm</text>
<text x="588.2" y="851" font-size="11" letter-spacing="0.8" fill="#000">1,1</text>
<rect x="510" y="855" width="1" height="19" fill="#000"/>
<rect x="551" y="855" width="1" height="19" fill="#000"/>
<text x="457.0" y="869" font-size="11" letter-spacing="0.5" fill="#000">fma</text>
<text x="512.7" y="869" font-size="11" letter-spacing="0.5" fill="#000">µm</text>
<text x="585.2" y="869" font-size="11" letter-spacing="0.8" fill="#000">17,7</text>
<rect x="510" y="873" width="1" height="19" fill="#000"/>
<rect x="551" y="873" width="1" height="19" fill="#000"/>
<text x="457.0" y="887" font-size="11" letter-spacing="0.5" fill="#000">fHß5</text>
<text x="512.7" y="887" font-size="11" letter-spacing="0.5" fill="#000">µm</text>
<text x="588.2" y="887" font-size="11" letter-spacing="0.8" fill="#000">7,8</text>
<rect x="510" y="891" width="1" height="19" fill="#000"/>
<rect x="551" y="891" width="1" height="19" fill="#000"/>
<text x="457.0" y="905" font-size="11" letter-spacing="0.5" fill="#000">Fßx</text>
<text x="512.7" y="905" font-size="11" letter-spacing="0.5" fill="#000">µm</text>
<text x="588.2" y="905" font-size="11" letter-spacing="0.8" fill="#000">0,0</text>
<rect x="510" y="909" width="1" height="19" fill="#000"/>
<rect x="551" y="909" width="1" height="19" fill="#000"/>
<text x="457.0" y="923" font-size="11" letter-spacing="0.5" fill="#000">Fßy</text>
<text x="512.7" y="923" font-size="11" letter-spacing="0.5" fill="#000">µm</text>
<text x="588.2" y="923" font-size="11" letter-spacing="0.8" fill="#000">0,0</text>
<rect x="663" y="746" width="106" height="1" fill="#000"/>
<rect x="663" y="764" width="106" height="1" fill="#000"/>
<rect x="663" y="782" width="106" height="1" fill="#000"/>
<rect x="663" y="799" width="106" height="1" fill="#000"/>
<rect x="663" y="817" width="106" height="1" fill="#000"/>
<rect x="663" y="835" width="106" height="1" fill="#000"/>
<rect x="663" y="853" width="106" height="1" fill="#000"/>
<rect x="663" y="871" width="106" height="1" fill="#000"/>
<rect x="663" y="889" width="106" height="1" fill="#000"/>
<rect x="663" y="907" width="106" height="1" fill="#000"/>
<rect x="663" y="925" width="106" height="1" fill="#000"/>
<rect x="663" y="746" width="1" height="180" fill="#000"/>
<rect x="768" y="746" width="1" height="180" fill="#000"/>
<text x="666.5" y="759" font-size="11" letter-spacing="0.5" fill="#000">Dimensions</text>
<rect x="728" y="764" width="1" height="19" fill="#000"/>
<text x="666.0" y="777" font-size="11" letter-spacing="0.5" fill="#000">alpha t</text>
<text x="735.2" y="777" font-size="11" letter-spacing="0.8" fill="#000">23,01</text>
<rect x="728" y="782" width="1" height="18" fill="#000"/>
<text x="666.0" y="795" font-size="11" letter-spacing="0.5" fill="#000">alpha wt</text>
<text x="735.2" y="795" font-size="11" letter-spacing="0.8" fill="#000">22,76</text>
<rect x="728" y="799" width="1" height="19" fill="#000"/>
<text x="666.0" y="813" font-size="11" letter-spacing="0.5" fill="#000">beta b</text>
<text x="735.2" y="813" font-size="11" letter-spacing="0.8" fill="#000">28,95</text>
<rect x="728" y="817" width="1" height="19" fill="#000"/>
<text x="666.0" y="831" font-size="11" letter-spacing="0.5" fill="#000">u</text>
<text x="734.2" y="831" font-size="11" letter-spacing="0.8" fill="#000">-2,33</text>
<rect x="728" y="835" width="1" height="19" fill="#000"/>
<text x="666.0" y="849" font-size="11" letter-spacing="0.5" fill="#000">eps.alpha</text>
<text x="738.2" y="849" font-size="11" letter-spacing="0.8" fill="#000">1,40</text>
<rect x="728" y="853" width="1" height="19" fill="#000"/>
<text x="666.0" y="867" font-size="11" letter-spacing="0.5" fill="#000">eps.beta</text>
<text x="738.2" y="867" font-size="11" letter-spacing="0.8" fill="#000">4,22</text>
<rect x="728" y="871" width="1" height="19" fill="#000"/>
<text x="666.0" y="885" font-size="11" letter-spacing="0.5" fill="#000">eps.gamma</text>
<text x="738.2" y="885" font-size="11" letter-spacing="0.8" fill="#000">5,62</text>
<rect x="728" y="889" width="1" height="19" fill="#000"/>
<text x="666.0" y="903" font-size="11" letter-spacing="0.5" fill="#000">jt min</text>
<text x="738.2" y="903" font-size="11" letter-spacing="0.8" fill="#000">0,16</text>
<rect x="728" y="907" width="1" height="19" fill="#000"/>
<text x="666.0" y="921" font-size="11" letter-spacing="0.5" fill="#000">jt max</text>
<text x="738.2" y="921" font-size="11" letter-spacing="0.8" fill="#000">0,67</text>
<rect x="783" y="761" width="146" height="1" fill="#000"/>
<rect x="783" y="779" width="146" height="1" fill="#000"/>
<rect x="783" y="796" width="146" height="1" fill="#000"/>
<rect x="783" y="814" width="146" height="1" fill="#000"/>
<rect x="783" y="832" width="146" height="1" fill="#000"/>
<rect x="783" y="850" width="146" height="1" fill="#000"/>
<rect x="783" y="868" width="146" height="1" fill="#000"/>
<rect x="783" y="886" width="146" height="1" fill="#000"/>
<rect x="783" y="904" width="146" height="1" fill="#000"/>
<rect x="783" y="922" width="146" height="1" fill="#000"/>
<rect x="783" y="761" width="1" height="162" fill="#000"/>
<rect x="928" y="761" width="1" height="162" fill="#000"/>
<text x="847.7" y="774" font-size="11" letter-spacing="0.8" fill="#000">1</text>
<text x="896.7" y="774" font-size="11" letter-spacing="0.8" fill="#000">2</text>
<rect x="831" y="779" width="1" height="18" fill="#000"/>
<rect x="880" y="779" width="1" height="18" fill="#000"/>
<text x="786.0" y="792" font-size="11" letter-spacing="0.5" fill="#000">b</text>
<text x="837.7" y="792" font-size="11" letter-spacing="0.8" fill="#000">90,00</text>
<text x="886.7" y="792" font-size="11" letter-spacing="0.8" fill="#000">90,00</text>
<rect x="831" y="796" width="1" height="19" fill="#000"/>
<rect x="880" y="796" width="1" height="19" fill="#000"/>
<text x="786.0" y="810" font-size="11" letter-spacing="0.5" fill="#000">dw</text>
<text x="835.2" y="810" font-size="11" letter-spacing="0.8" fill="#000">281,25</text>
<text x="883.2" y="810" font-size="11" letter-spacing="0.8" fill="#000">-656,25</text>
<rect x="831" y="814" width="1" height="19" fill="#000"/>
<rect x="880" y="814" width="1" height="19" fill="#000"/>
<text x="786.0" y="828" font-size="11" letter-spacing="0.5" fill="#000">zn</text>
<text x="835.2" y="828" font-size="11" letter-spacing="0.8" fill="#000">105,15</text>
<text x="883.2" y="828" font-size="11" letter-spacing="0.8" fill="#000">-245,35</text>
<rect x="831" y="832" width="1" height="19" fill="#000"/>
<rect x="880" y="832" width="1" height="19" fill="#000"/>
<text x="786.0" y="846" font-size="11" letter-spacing="0.5" fill="#000">sat min</text>
<text x="840.7" y="846" font-size="11" letter-spacing="0.8" fill="#000">3,01</text>
<text x="890.2" y="846" font-size="11" letter-spacing="0.8" fill="#000">3,43</text>
<rect x="831" y="850" width="1" height="19" fill="#000"/>
<rect x="880" y="850" width="1" height="19" fill="#000"/>
<text x="786.0" y="864" font-size="11" letter-spacing="0.5" fill="#000">Asne</text>
<text x="837.2" y="864" font-size="11" letter-spacing="0.8" fill="#000">-0,08</text>
<text x="886.2" y="864" font-size="11" letter-spacing="0.8" fill="#000">-0,10</text>
<rect x="831" y="868" width="1" height="19" fill="#000"/>
<rect x="880" y="868" width="1" height="19" fill="#000"/>
<text x="786.0" y="882" font-size="11" letter-spacing="0.5" fill="#000">Asni</text>
<text x="837.2" y="882" font-size="11" letter-spacing="0.8" fill="#000">-0,24</text>
<text x="886.2" y="882" font-size="11" letter-spacing="0.8" fill="#000">-0,30</text>
<rect x="831" y="886" width="1" height="19" fill="#000"/>
<rect x="880" y="886" width="1" height="19" fill="#000"/>
<text x="786.0" y="900" font-size="11" letter-spacing="0.5" fill="#000">zeta a</text>
<text x="840.7" y="900" font-size="11" letter-spacing="0.8" fill="#000">0,09</text>
<text x="890.2" y="900" font-size="11" letter-spacing="0.8" fill="#000">0,07</text>
<rect x="831" y="904" width="1" height="19" fill="#000"/>
<rect x="880" y="904" width="1" height="19" fill="#000"/>
<text x="786.0" y="918" font-size="11" letter-spacing="0.5" fill="#000">zeta f</text>
<text x="837.2" y="918" font-size="11" letter-spacing="0.8" fill="#000">-0,08</text>
<text x="886.2" y="918" font-size="11" letter-spacing="0.8" fill="#000">-0,10</text>
</svg></body></html>
